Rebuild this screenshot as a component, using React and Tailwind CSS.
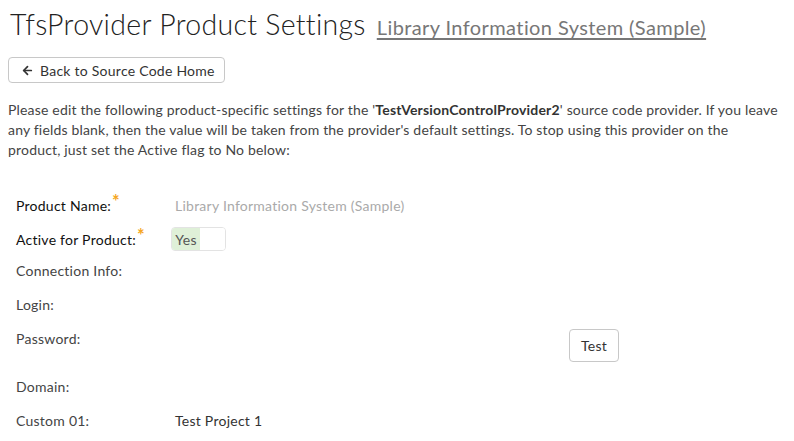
import { ArrowLeft } from 'lucide-react';

const body = { fontFamily: 'Lato, "Open Sans", sans-serif' };

function Label({ children, required }) {
  return (
    <div className={`w-[159px] shrink-0 text-[14px] ${required ? 'text-[#111]' : 'text-[#444]'}`}>
      {children}
      {required && (
        <span className="relative -top-[3px] ml-[1px] text-[#f5a623] text-[18px] font-bold leading-none">*</span>
      )}
    </div>
  );
}

export default function App() {
  return (
    <main className="w-[794px] h-[441px] overflow-hidden bg-white text-[#333] tracking-[0.25px]" style={body}>
      <header className="flex items-baseline px-[10px] pt-[3px] h-[48px]">
        <h1 className="text-[28.5px] font-light text-[#222] tracking-[0.3px]" style={{ fontFamily: 'Lato, sans-serif' }}>
          TfsProvider Product Settings
        </h1>
        <a href="#" className="ml-[11px] text-[20px] text-[#777] tracking-[0.4px] underline underline-offset-[3px]">
          Library Information System (Sample)
        </a>
      </header>

      <div className="px-[8px] pt-[9px]">
        <button className="h-[26px] w-[217px] flex items-center gap-[6px] pl-[12px] border border-[#c8c8c8] rounded-[4px] text-[14px] text-[#333]">
          <ArrowLeft size={13} strokeWidth={3.2} />
          Back to Source Code Home
        </button>
      </div>

      <p className="px-[8px] mt-[17px] text-[14px] leading-[20px] text-[#444] w-[794px] tracking-[0.18px]">
        Please edit the following product-specific settings for the '<b className="font-bold text-[#333]">TestVersionControlProvider2</b>' source code provider. If you leave any fields blank, then the value will be taken from the provider's default settings. To stop using this provider on the
        <br />
        product, just set the Active flag to No below:
      </p>

      <section className="pl-[16px] mt-[33px]">
        <div className="flex items-center h-[24px]">
          <Label required>Product Name:</Label>
          <span className="text-[14px] text-[#aaa]">Library Information System (Sample)</span>
        </div>

        <div className="flex items-center h-[24px] mt-[10px]">
          <Label required>Active for Product:</Label>
          <div className="-ml-[4px] flex h-[24px] w-[55px] border border-[#e3e3e3] rounded-[4px] overflow-hidden">
            <span className="w-[28px] bg-[#dff0d8] text-[14px] text-[#555] flex items-center justify-center">Yes</span>
            <span className="flex-1 bg-white" />
          </div>
        </div>

        <div className="flex items-center h-[24px] mt-[7px]">
          <Label>Connection Info:</Label>
        </div>

        <div className="flex items-center h-[24px] mt-[10px]">
          <Label>Login:</Label>
        </div>

        <div className="flex h-[36px] mt-[10px]">
          <div className="h-[24px] flex items-center">
            <Label>Password:</Label>
          </div>
          <div className="w-[394px]" />
          <button className="mt-[3px] h-[33px] w-[50px] border border-[#c8c8c8] rounded-[4px] text-[14px] text-[#333]">
            Test
          </button>
        </div>

        <div className="flex items-center h-[24px] mt-[12px]">
          <Label>Domain:</Label>
        </div>

        <div className="flex items-center h-[24px] mt-[10px]">
          <Label>Custom 01:</Label>
          <span className="text-[14px] text-[#333]">Test Project 1</span>
        </div>
      </section>
    </main>
  );
}
